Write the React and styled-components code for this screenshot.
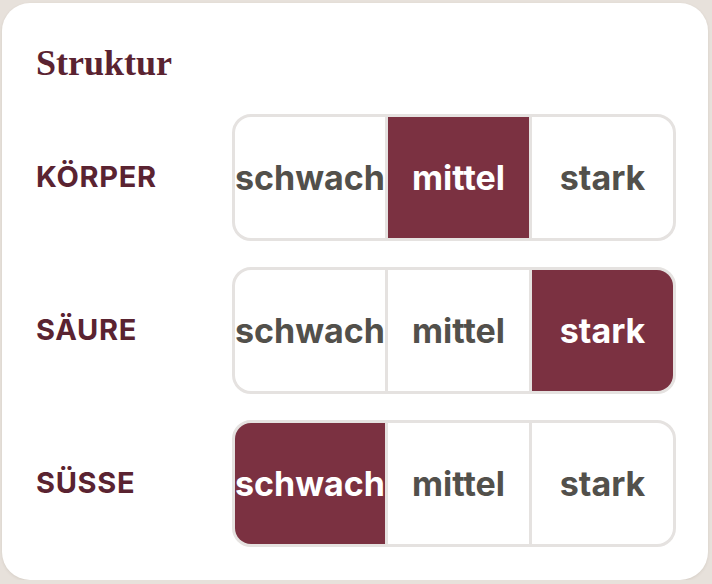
import React, { useState } from 'react'
import styled, { createGlobalStyle } from 'styled-components'

const GlobalStyle = createGlobalStyle`
  html, body {
    margin: 0;
    padding: 0;
    background: #e7e1db;
  }
  body {
    font-family: Inter, "Liberation Sans", sans-serif;
  }
`

const Card = styled.section`
  box-sizing: border-box;
  margin: 3px 4px 0 2px;
  height: 577px;
  background: #ffffff;
  border-radius: 28px;
  box-shadow: 0 1px 3px rgba(90, 70, 50, 0.12);
  padding: 40px 32px 0 34px;
`

const Title = styled.h2`
  margin: 0 0 30px 0;
  font-family: "Liberation Serif", "DejaVu Serif", serif;
  font-weight: 700;
  font-size: 36px;
  line-height: 41px;
  color: #5a2331;
`

const Rows = styled.div`
  display: flex;
  flex-direction: column;
  gap: 26px;
`

const Row = styled.div`
  display: grid;
  grid-template-columns: 196px 1fr;
  align-items: center;
`

const Label = styled.div`
  margin-top: -3px;
  font-weight: 700;
  font-size: 29px;
  letter-spacing: 0.7px;
  color: #5a2331;
`

const Segmented = styled.div`
  display: flex;
  height: 127px;
  box-sizing: border-box;
  border: 3px solid #e5e2e0;
  border-radius: 19px;
  overflow: hidden;
  background: #e5e2e0;
  gap: 3px;
`

const Option = styled.button`
  flex: 1;
  display: flex;
  align-items: center;
  justify-content: center;
  padding: 0;
  border: none;
  margin: 0;
  font-family: Inter, "Liberation Sans", sans-serif;
  font-weight: 700;
  font-size: 34px;
  letter-spacing: 0;
  cursor: pointer;
  background: ${p => (p.$active ? '#7b3141' : '#ffffff')};
  color: ${p => (p.$active ? '#ffffff' : '#52504b')};
`

const levels = ['schwach', 'mittel', 'stark']

const initial = [
  { key: 'body', label: 'KÖRPER', value: 'mittel' },
  { key: 'acid', label: 'SÄURE', value: 'stark' },
  { key: 'sweet', label: 'SÜSSE', value: 'schwach' }
]

export default function App() {
  const [rows, setRows] = useState(initial)

  const pick = (key, value) =>
    setRows(rs => rs.map(r => (r.key === key ? { ...r, value } : r)))

  return (
    <>
      <GlobalStyle />
      <Card>
        <Title>Struktur</Title>
        <Rows>
          {rows.map(row => (
            <Row key={row.key}>
              <Label>{row.label}</Label>
              <Segmented>
                {levels.map(level => (
                  <Option
                    key={level}
                    $active={row.value === level}
                    onClick={() => pick(row.key, level)}
                  >
                    {level}
                  </Option>
                ))}
              </Segmented>
            </Row>
          ))}
        </Rows>
      </Card>
    </>
  )
}
